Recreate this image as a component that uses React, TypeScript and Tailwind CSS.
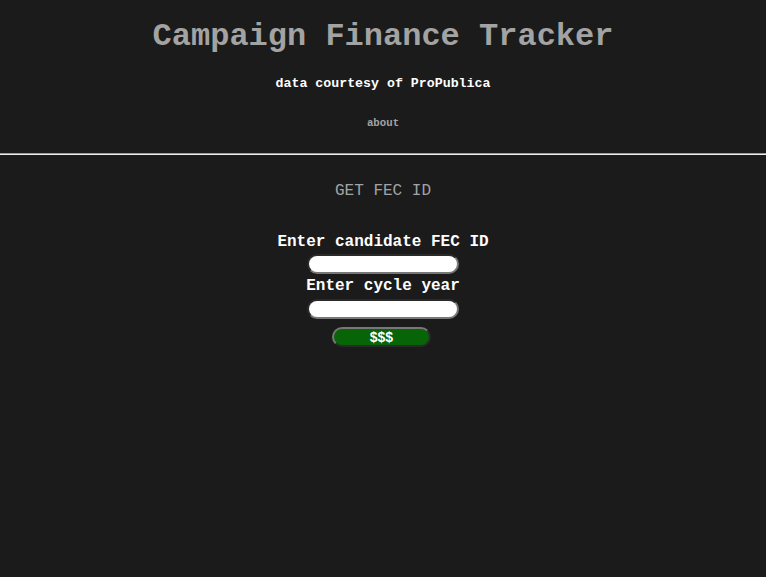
export default function App() {
  return (
    <div className="min-h-[577px] bg-[#1b1b1b] font-['Liberation_Mono','Courier_New',monospace] text-center">
      <div className="pt-[19px]">
        <h1 className="text-[32px] leading-[36px] font-bold text-[#a3a3a3]">Campaign Finance Tracker</h1>
        <h5 className="mt-[21px] text-[13.28px] leading-[16px] font-bold text-white">data courtesy of ProPublica</h5>
        <h6 className="mt-[25px] text-[10.72px] leading-[12px] font-bold text-[#a3a3a3]">about</h6>
      </div>
      <div className="mt-[24px] border-t border-b border-t-[#9a9a9a] border-b-[#eeeeee]" />
      <div className="flex flex-col items-center">
        <h3 className="mt-[27px] text-[16px] leading-[18px] text-[#a3a3a3]">GET FEC ID</h3>
        <form className="mt-[33px] flex flex-col items-center">
          <label className="text-[16px] leading-[18px] font-bold text-white">Enter candidate FEC ID</label>
          <input className="mt-[3px] h-[20px] w-[152px] rounded-full border-2 border-t-[#2a2a2a] border-l-[#2a2a2a] border-b-[#777] border-r-[#777] bg-white" />
          <label className="mt-[3px] text-[16px] leading-[18px] font-bold text-white">Enter cycle year</label>
          <input className="mt-[4px] h-[20px] w-[152px] rounded-full border-2 border-t-[#2a2a2a] border-l-[#2a2a2a] border-b-[#777] border-r-[#777] bg-white" />
          <button type="button" className="mt-[8px] ml-[-3px] h-[20px] w-[99px] rounded-full border-2 border-t-[#777] border-l-[#777] border-b-[#2a2a2a] border-r-[#2a2a2a] bg-[#076407] font-['Liberation_Sans',Arial,sans-serif] text-[14px] leading-[14px] font-bold text-white">
            $$$
          </button>
        </form>
      </div>
    </div>
  );
}
